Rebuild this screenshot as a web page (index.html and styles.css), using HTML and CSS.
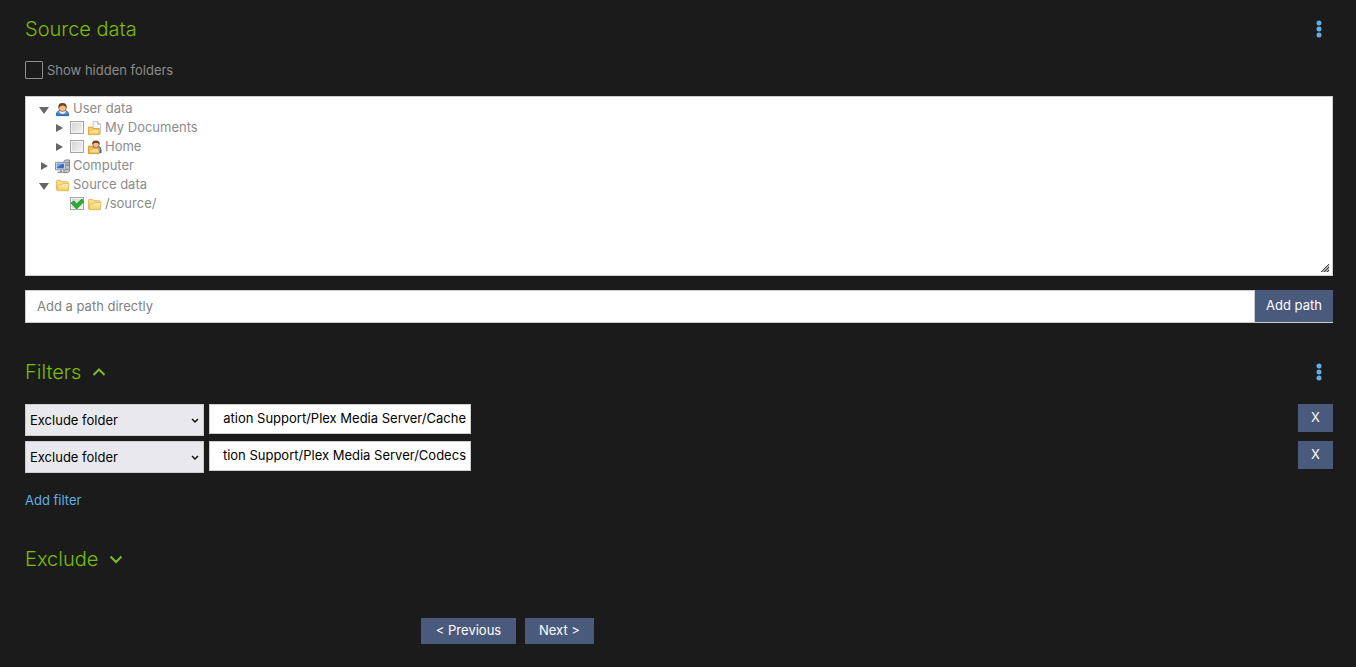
FILE: index.html
```html
<!DOCTYPE html>
<html lang="en">
<head>
<meta charset="utf-8">
<title>Source data</title>
<meta name="viewport" content="width=device-width, initial-scale=1">
<link rel="stylesheet" href="styles.css">
</head>
<body>
<svg class="defs" aria-hidden="true">
  <defs>
    <linearGradient id="gold" x1="0" y1="0" x2="0" y2="1"><stop offset="0" stop-color="#fff3b8"/><stop offset="1" stop-color="#f4cb5c"/></linearGradient>
    <linearGradient id="blue" x1="0" y1="0" x2="0" y2="1"><stop offset="0" stop-color="#8fc0f3"/><stop offset="1" stop-color="#2c64b8"/></linearGradient>
    <symbol id="folder" viewBox="0 0 16 16">
      <path d="M1.500 12.500v-9q0-1 1-1h3.500l1.500 1.500h5.500q1 0 1 1v7.500z" fill="#f8dc8c" stroke="#e3b458"/>
      <path d="M2.500 13.500l.5-6h4l1.500-1.500h6.500l-.8 7.500z" fill="url(#gold)" stroke="#e5b957"/>
    </symbol>
    <symbol id="user" viewBox="0 0 16 16">
      <path d="M1.500 14.500q-.5-4 3.500-5.500h6q4 1.500 3.500 5.500z" fill="url(#blue)" stroke="#2a5ba6"/>
      <path d="M4.500 9.500h7l-1.500 3h-4z" fill="#f1f6ff"/>
      <circle cx="8" cy="6.200" r="4" fill="#f3bb87" stroke="#a2602d" stroke-width=".8"/>
      <path d="M3.600 6.500q-.8-5.500 4.400-5.500t4.400 5.500q-1.700-2.800-4-2.700-3 0-4.800 2.700z" fill="#75401c"/>
    </symbol>
    <symbol id="documents" viewBox="0 0 16 16">
      <path d="M6.500 11V.500h5l3 3v10h-8z" fill="#f8f8f8" stroke="#c4c4c4"/>
      <path d="M11.500 .5v3h3" fill="#ddd" stroke="#b7b7b7"/>
      <path d="M1.500 14.500v-8h4l1 1.500h6.500v6.500z" fill="#f5cf65" stroke="#dca335"/>
      <path d="M2.500 14v-3.500h3l1.500-1h5.500v4.500z" fill="url(#gold)" stroke="#e5b94f" stroke-width=".7"/>
    </symbol>
    <symbol id="home" viewBox="0 0 16 16">
      <path d="M4 11q0-4 3-4.500h5q3 .5 3 5v2h-11z" fill="url(#blue)" stroke="#2a5ba6"/>
      <circle cx="9.500" cy="4.800" r="3.300" fill="#f3bb87" stroke="#a2602d" stroke-width=".8"/>
      <path d="M5.500 5q-.5-4.500 4-4.500t4 4.500q-1.500-2-4-2t-4 2z" fill="#75401c"/>
      <path d="M1.500 14.500v-8h4l1 2h6.500v6z" fill="#f1c04f" stroke="#d9962c"/>
      <path d="M2.500 14v-3.500h3l1.500-1h5.500v4.500z" fill="url(#gold)" stroke="#e0a53a" stroke-width=".7"/>
    </symbol>
    <symbol id="computer" viewBox="0 0 16 16">
      <path d="M9.500 2.500l1.500-1.500h4.500v12l-2 1.500h-4z" fill="#c3c7cb" stroke="#777d84"/>
      <path d="M12 4h3M12 6.500h3M12 11h2" stroke="#626870"/>
      <path d="M.5 3.500h10.500v8H.5z" fill="#dfe3e7" stroke="#848b93"/>
      <path d="M2 5h7.500v5H2z" fill="#356bc2"/><path d="M2 5h6l-6 4z" fill="#78a8e8"/>
      <path d="M5 12h2.500v1.500h2v1.500h-7v-1.500h2.500z" fill="#92989f"/>
    </symbol>
  </defs>
</svg>
<main class="page">
  <section class="source">
    <header class="section-head">
      <h2 class="heading">Source data</h2>
      <button class="menu" type="button" aria-label="Source data menu"><svg class="dots" viewBox="0 0 6 18"><circle cx="3" cy="3" r="2.500"/><circle cx="3" cy="9" r="2.500"/><circle cx="3" cy="15" r="2.500"/></svg></button>
    </header>
    <div class="hidden-option"><input class="box" id="show-hidden" type="checkbox"><label for="show-hidden">Show hidden folders</label></div>
    <div class="tree">
      <ul class="branch">
        <li>
          <div class="node"><button class="toggle open" type="button" aria-label="Collapse User data"></button><svg class="icon"><use href="#user"/></svg><span class="name">User data</span></div>
          <ul class="branch nested">
            <li class="node"><button class="toggle" type="button" aria-label="Expand My Documents"></button><input class="check" id="docs" type="checkbox"><svg class="icon"><use href="#documents"/></svg><label class="name" for="docs">My Documents</label></li>
            <li class="node"><button class="toggle" type="button" aria-label="Expand Home"></button><input class="check" id="home-check" type="checkbox"><svg class="icon"><use href="#home"/></svg><label class="name" for="home-check">Home</label></li>
          </ul>
        </li>
        <li class="node"><button class="toggle" type="button" aria-label="Expand Computer"></button><svg class="icon"><use href="#computer"/></svg><span class="name">Computer</span></li>
        <li>
          <div class="node"><button class="toggle open" type="button" aria-label="Collapse Source data"></button><svg class="icon"><use href="#folder"/></svg><span class="name">Source data</span></div>
          <ul class="branch nested">
            <li class="node leaf"><span class="tick"><input class="check" id="source-check" type="checkbox" checked><svg class="tick-mark" viewBox="0 0 14 14"><path d="M1 6l3-2 2.500 3L12 2l1.500 3L6.500 12z" fill="#24b329" stroke="#087d14" stroke-width=".7"/></svg></span><svg class="icon"><use href="#folder"/></svg><label class="name" for="source-check">/source/</label></li>
          </ul>
        </li>
      </ul>
      <svg class="grip" viewBox="0 0 8 8"><path d="M0 8L8 0v8z" fill="#aaa"/><path d="M0 8L8 0M3 8l5-5M6 8l2-2" stroke="#444"/></svg>
    </div>
    <div class="path-row"><input class="path-input" type="text" placeholder="Add a path directly" aria-label="Add a path directly"><button class="button add-path" type="button">Add path</button></div>
  </section>
  <section class="filters">
    <header class="section-head">
      <h2 class="heading"><button class="expander" type="button" aria-expanded="true">Filters <svg class="chevron" viewBox="0 0 14 14"><path d="M1.500 10L7 4.500l5.500 5.500"/></svg></button></h2>
      <button class="menu" type="button" aria-label="Filters menu"><svg class="dots" viewBox="0 0 6 18"><circle cx="3" cy="3" r="2.500"/><circle cx="3" cy="9" r="2.500"/><circle cx="3" cy="15" r="2.500"/></svg></button>
    </header>
    <div class="filter-list">
      <div class="filter-row">
        <div class="select-wrap"><select class="select" aria-label="Filter type 1"><option>Exclude folder</option></select><svg class="caret" viewBox="0 0 8 6"><path d="M1 1l3 3 3-3"/></svg></div>
        <input class="filter-input" type="text" aria-label="Folder 1" value="ation Support/Plex Media Server/Cache">
        <button class="button remove" type="button" aria-label="Remove filter 1">X</button>
      </div>
      <div class="filter-row">
        <div class="select-wrap"><select class="select" aria-label="Filter type 2"><option>Exclude folder</option></select><svg class="caret" viewBox="0 0 8 6"><path d="M1 1l3 3 3-3"/></svg></div>
        <input class="filter-input" type="text" aria-label="Folder 2" value="tion Support/Plex Media Server/Codecs">
        <button class="button remove" type="button" aria-label="Remove filter 2">X</button>
      </div>
    </div>
    <a class="add-filter" href="#">Add filter</a>
  </section>
  <section class="exclude">
    <h2 class="heading"><button class="expander" type="button" aria-expanded="false">Exclude <svg class="chevron" viewBox="0 0 14 14"><path d="M1.500 4.500L7 10l5.500-5.500"/></svg></button></h2>
  </section>
  <nav class="steps"><button class="button step previous" type="button">&lt; Previous</button><button class="button step next" type="button">Next &gt;</button></nav>
</main>
</body>
</html>
```
FILE: styles.css
```css
* { box-sizing: border-box; }
body { margin: 0; background: #1b1b1b; color: #8c8c8c; font: 13px/20px Inter, "Noto Sans", sans-serif; }
button, input, select { font: inherit; margin: 0; border-radius: 0; }
button { border: 0; padding: 0; background: none; color: inherit; cursor: pointer; }
.defs { position: absolute; width: 0; height: 0; }
.page { padding: 14px 23px 20px 25px; }
.section-head { display: flex; justify-content: space-between; align-items: center; height: 30px; }
.heading { margin: 0; font-size: 20px; line-height: 30px; font-weight: 300; color: #7bbd00; }
.menu { display: flex; justify-content: center; width: 28px; height: 30px; align-items: center; }
.dots { width: 6px; height: 18px; fill: #5fb0e5; }
.hidden-option { display: flex; align-items: center; gap: 4px; margin-top: 16px; height: 20px; }
.box { appearance: none; width: 18px; height: 18px; border: 1px solid #8f8f8f; border-radius: 1px; }
.tree { position: relative; height: 180px; margin-top: 16px; padding: 2px 10px; background: #fff; border: 1px solid #ccc; }
.branch { list-style: none; margin: 0; padding: 0; }
.nested { padding-left: 15px; }
.node { display: flex; align-items: center; gap: 3px; height: 19px; }
.leaf { padding-left: 19px; }
.name { padding-bottom: 2px; }
.toggle { display: flex; width: 16px; height: 16px; align-items: center; justify-content: center; }
.toggle::before { content: ""; border: solid transparent; border-width: 4px 0 4px 7px; border-left-color: #666; }
.toggle.open::before { border-width: 7px 5px 0; border-color: #666 transparent transparent; margin-top: 3px; }
.icon { width: 15px; height: 15px; margin-top: 2px; }
.check { appearance: none; display: block; width: 14px; height: 13px; border: 1px solid #a5a5a5; background: linear-gradient(135deg, #d2d2d2, #f5f5f5); box-shadow: inset 0 0 0 1px #f4f4f4; }
.tick { position: relative; }
.tick-mark { position: absolute; left: 0; top: 0; width: 14px; height: 14px; pointer-events: none; }
.grip { position: absolute; right: 3px; bottom: 3px; width: 8px; height: 8px; }
.path-row { display: flex; height: 33px; margin-top: 14px; background: #fff; border: 1px solid #ccc; border-width: 0 0 1px; }
.path-input { flex: 1; min-width: 0; padding: 0 11px 2px; border: 1px solid #ccc; border-bottom: 0; background: #fff; color: #000; }
.path-input::placeholder { color: #808080; opacity: 1; }
.button { background: #4a5a7c; color: #fff; padding-bottom: 2px; }
.add-path { width: 78px; }
.filters { margin-top: 34px; }
.expander { display: flex; align-items: center; gap: 11px; }
.chevron { width: 14px; height: 14px; fill: none; stroke: #7bbd24; stroke-width: 2; }
.filter-list { display: grid; gap: 5px; margin-top: 17px; }
.filter-row { display: flex; align-items: flex-start; gap: 5px; }
.select-wrap { position: relative; width: 179px; }
.select { appearance: none; display: block; width: 100%; height: 32px; padding: 0 4px; border: 1px solid #ccc; background: #e9e9ed; color: #000; }
.caret { position: absolute; right: 5px; top: 14px; width: 8px; height: 6px; fill: none; stroke: #111; stroke-width: 1.500; pointer-events: none; }
.filter-input { width: 262px; height: 30px; padding: 0 4px 2px; border: 1px solid #ccc; background: #fff; color: #000; text-align: right; }
.remove { width: 35px; height: 28px; margin-left: auto; }
.add-filter { display: inline-block; margin-top: 17px; color: #5fb0e5; text-decoration: none; }
.exclude { margin-top: 34px; }
.steps { display: flex; gap: 9px; margin-top: 44px; padding-left: 396px; }
.step { height: 26px; }
.previous { width: 95px; }
.next { width: 69px; }
```
